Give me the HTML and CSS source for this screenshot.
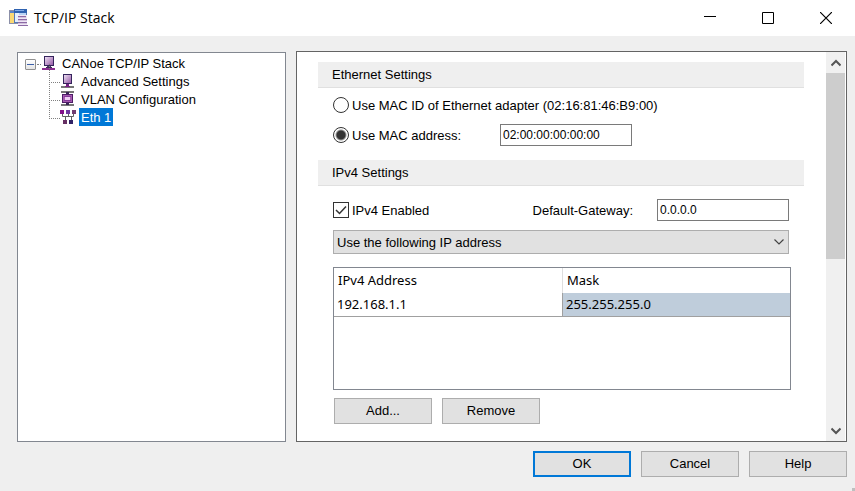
FILE: index.html
```html
<!DOCTYPE html>
<html lang="en">
<head>
<meta charset="utf-8">
<title>TCP/IP Stack</title>
<link rel="stylesheet" href="styles.css">
</head>
<body>
<header class="titlebar">
  <svg class="app-icon" width="20" height="18" viewBox="0 0 20 18" aria-hidden="true">
    <rect x="0.5" y="1.5" width="10" height="13" fill="#fbd873" stroke="#8b8fa8"/>
    <rect x="1" y="2" width="5" height="2" fill="#5b83c6"/>
    <rect x="5.5" y="0.5" width="12" height="13" fill="#b9d3f5" stroke="#5579b5"/>
    <rect x="5" y="0" width="13" height="4" fill="#2f62b0"/>
    <rect x="6" y="1" width="9" height="1" fill="#82aae6"/>
    <rect x="6" y="4" width="4" height="9" fill="#e5effc"/>
    <rect x="9" y="6" width="9" height="11" fill="#efe6f5"/>
    <path d="M9 7.5h8M9 10.5h9M9 13.5h9M9 16.5h10" stroke="#8c6aa5"/>
    <path d="M9 8.5h8M9 11.5h9M9 14.5h9" stroke="#d3c3de"/>
  </svg>
  <h1 class="title">TCP/IP Stack</h1>
  <div class="window-controls">
    <button class="window-button" type="button" aria-label="Minimize"><svg width="12" height="12" viewBox="0 0 12 12"><path d="M0 4.5h12" stroke="#000"/></svg></button>
    <button class="window-button" type="button" aria-label="Maximize"><svg width="12" height="12" viewBox="0 0 12 12"><path d="M.5.5h11v11H.5z" fill="none" stroke="#000"/></svg></button>
    <button class="window-button" type="button" aria-label="Close"><svg width="12" height="12" viewBox="0 0 12 12"><path d="M0 0l12 12M12 0L0 12" stroke="#000" stroke-width="1.2"/></svg></button>
  </div>
</header>

<main class="workspace">
  <nav class="tree" aria-label="Configuration">
    <div class="tree-row tree-root">
      <button class="expander" type="button" aria-label="Collapse"></button>
      <span class="root-link"></span>
      <svg class="tree-icon" width="16" height="16" viewBox="0 0 16 16" aria-hidden="true">
        <defs><linearGradient id="screen" x1="0" y1="0" x2="1" y2="1"><stop offset="0" stop-color="#f0e6f5"/><stop offset="1" stop-color="#9354a4"/></linearGradient></defs>
        <rect x="3.5" y="1.5" width="9" height="9" fill="url(#screen)" stroke="#35245c"/>
        <rect x="6" y="11" width="4" height="2" fill="#4a3168"/>
        <path d="M1 14h13" stroke="#8b2f91" stroke-width="2"/><path d="M5 12.5h6" stroke="#3b2d55"/>
      </svg>
      <a class="tree-label" href="#stack">CANoe TCP/IP Stack</a>
    </div>
    <ul class="tree-children">
      <li class="tree-row">
        <svg class="tree-icon" width="16" height="16" viewBox="0 0 16 16" aria-hidden="true">
          <rect x="3.5" y="1.5" width="8" height="9" fill="url(#screen)" stroke="#35245c"/>
          <rect x="6" y="11" width="3" height="2" fill="#722080"/>
          <path d="M1 14h13" stroke="#777" stroke-width="2"/><path d="M5 13.5h5" stroke="#7c2086"/>
        </svg>
        <a class="tree-label" href="#advanced">Advanced Settings</a>
      </li>
      <li class="tree-row">
        <svg class="tree-icon" width="16" height="16" viewBox="0 0 16 16" aria-hidden="true">
          <path d="M1 1h13M1 14h13" stroke="#777" stroke-width="2"/>
          <path d="M6 2.5h3M6 12.5h3" stroke="#382452" stroke-width="3"/>
          <rect x="2.5" y="3.5" width="10" height="8" fill="#a45aae" stroke="#4d1c66"/>
          <path d="M4 5.5h7M4 9.5h7" stroke="#84389a"/>
          <rect x="5" y="6" width="5" height="3" fill="#efcdf3"/>
        </svg>
        <a class="tree-label" href="#vlan">VLAN Configuration</a>
      </li>
      <li class="tree-row">
        <svg class="tree-icon" width="16" height="16" viewBox="0 0 16 16" aria-hidden="true">
          <path d="M2.5 4v3.500h11V4M8.500 4v3.500M5.500 7v4M11.500 7v4" fill="none" stroke="#606060"/>
          <path d="M0 1h4v4H0z" fill="#84118a"/><path d="M6 1h4v4H6z" fill="#6d369f"/><path d="M12 1h4v4h-4z" fill="#713d70"/>
          <path d="M3 11h4v4H3z" fill="#663063"/><path d="M9 11h4v4H9z" fill="#302266"/>
        </svg>
        <a class="tree-label selected" href="#eth1" aria-current="true">Eth 1</a>
      </li>
    </ul>
  </nav>

  <div class="panel">
    <form class="settings" id="settings">
      <h2 class="section-title">Ethernet Settings</h2>
      <div class="section ethernet">
        <div class="field-row"><input class="radio" type="radio" name="mac" id="mac-adapter"><label for="mac-adapter">Use MAC ID of Ethernet adapter (02:16:81:46:B9:00)</label></div>
        <div class="field-row"><input class="radio" type="radio" name="mac" id="mac-custom" checked><label class="mac-label" for="mac-custom">Use MAC address:</label><input class="textbox" type="text" aria-label="MAC address" value="02:00:00:00:00:00"></div>
      </div>
      <h2 class="section-title">IPv4 Settings</h2>
      <div class="section ipv4">
        <div class="field-row enable-row">
          <span class="check"><input class="checkbox" type="checkbox" id="ipv4-enabled" checked><svg class="tick" width="16" height="16" viewBox="0 0 16 16" aria-hidden="true"><path d="M3 8l3.500 3.500L13 4.500" fill="none" stroke="#333" stroke-width="1.500"/></svg></span>
          <label for="ipv4-enabled">IPv4 Enabled</label>
          <label class="gateway-label" for="gateway">Default-Gateway:</label>
          <input class="textbox" type="text" id="gateway" value="0.0.0.0">
        </div>
        <div class="select-wrap">
          <select class="select" aria-label="Address mode"><option>Use the following IP address</option></select>
          <svg class="select-arrow" width="10" height="6" viewBox="0 0 10 6" aria-hidden="true"><path d="M.5.5L5 5 9.500.5" fill="none" stroke="#444" stroke-width="1.200"/></svg>
        </div>
        <div class="grid-box">
          <table class="address-table">
            <thead><tr><th scope="col">IPv4 Address</th><th scope="col">Mask</th></tr></thead>
            <tbody><tr><td>192.168.1.1</td><td class="active-cell">255.255.255.0</td></tr></tbody>
          </table>
        </div>
        <div class="button-row">
          <button class="button" type="button">Add...</button>
          <button class="button" type="button">Remove</button>
        </div>
      </div>
    </form>
    <div class="scrollbar" role="scrollbar" aria-controls="settings" aria-valuenow="0">
      <button class="scroll-button" type="button" aria-label="Scroll up"><svg width="10" height="8" viewBox="0 0 10 8"><path d="M.5 6.500L5 2l4.500 4.500" fill="none" stroke="#555" stroke-width="2"/></svg></button>
      <div class="scroll-track"><div class="scroll-thumb"></div></div>
      <button class="scroll-button" type="button" aria-label="Scroll down"><svg width="10" height="8" viewBox="0 0 10 8"><path d="M.5 1.500L5 6l4.500-4.500" fill="none" stroke="#555" stroke-width="2"/></svg></button>
    </div>
  </div>
</main>

<footer class="dialog-actions">
  <button class="button default" type="submit" form="settings">OK</button>
  <button class="button" type="button">Cancel</button>
  <button class="button" type="button">Help</button>
</footer>
<span class="size-grip"></span>
</body>
</html>
```
FILE: styles.css
```css
* {
  box-sizing: border-box;
}

body {
  margin: 0;
  min-height: 100vh;
  display: flex;
  flex-direction: column;
  background: #efefef;
  color: #000;
  font: 13px/18px "Liberation Sans", Arial, sans-serif;
}

button,
input,
select {
  font: inherit;
  color: inherit;
  margin: 0;
}

svg {
  display: block;
  flex: none;
}

/* Title bar */
.titlebar {
  display: flex;
  align-items: center;
  height: 36px;
  padding-left: 9px;
  background: #fff;
}

.title {
  margin: 0 auto 0 5px;
  font: 14px/20px "Open Sans", "Noto Sans", sans-serif;
}

.window-controls {
  display: flex;
}

.window-button {
  display: grid;
  place-items: center;
  width: 58px;
  height: 34px;
  padding: 0;
  border: 0;
  background: none;
}

/* Main area */
.workspace {
  flex: 1;
  display: grid;
  grid-template-columns: 269px 1fr;
  gap: 10px;
  padding: 15px 8px 0 17px;
}

.tree {
  margin-top: 1px;
  padding: 1px 7px;
  border: 1px solid #828790;
  background: #fff;
}

.tree-row {
  display: flex;
  align-items: center;
  height: 18px;
}

.expander {
  position: relative;
  width: 11px;
  height: 11px;
  margin-top: 2px;
  padding: 0;
  border: 1px solid #919191;
  border-radius: 1px;
  background: linear-gradient(#fff, #e4e4e4);
}

.expander::before {
  content: "";
  position: absolute;
  inset: 4px 1px auto;
  border-top: 1px solid #3c5fa8;
}

.root-link {
  width: 4px;
  margin: 2px 0 0 1px;
  border-top: 1px dotted #808080;
}

.tree-label {
  margin-left: 3px;
  padding: 1px 2px 0;
  line-height: 17px;
  color: inherit;
  text-decoration: none;
}

.selected {
  background: #0078d7;
  color: #fff;
}

.tree-children {
  margin: 0;
  padding: 0 0 0 35px;
  list-style: none;
}

.tree-children .tree-row {
  position: relative;
}

.tree-children .tree-row::before {
  content: "";
  position: absolute;
  left: -11px;
  top: -8px;
  width: 10px;
  height: 18px;
  border: 1px dotted #808080;
  border-width: 0 0 1px 1px;
}

/* Settings panel */
.panel {
  display: flex;
  padding-right: 1px;
  border: 1px solid #646464;
  background: #fff;
}

.settings {
  flex: 1;
  padding: 10px 22px 16px 21px;
}

.section-title {
  height: 26px;
  margin: 0;
  padding-left: 14px;
  border-bottom: 1px solid #e0e0e0;
  background: #efefef;
  font: inherit;
  line-height: 25px;
}

.section {
  padding: 0 15px;
}

.ethernet {
  padding-top: 2px;
  padding-bottom: 10px;
}

.field-row {
  display: flex;
  align-items: center;
  height: 30px;
  gap: 3px;
}

.field-row label {
  padding-top: 1px;
}

.radio {
  appearance: none;
  flex: none;
  width: 16px;
  height: 16px;
  border: 1px solid #333;
  border-radius: 50%;
  background: #fff;
}

.radio:checked {
  background: radial-gradient(circle, #333 4px, #fff 6px);
}

.mac-label {
  width: 145px;
}

.textbox {
  width: 132px;
  height: 22px;
  padding: 0 2px;
  border: 1px solid #7a7a7a;
  border-radius: 0;
  background: #fff;
  font-size: 12px;
}

.ipv4 {
  padding-top: 9px;
}

.enable-row {
  margin-bottom: 5px;
}

.check {
  position: relative;
}

.checkbox {
  appearance: none;
  display: block;
  width: 16px;
  height: 16px;
  border: 1px solid #333;
  background: #fff;
}

.tick {
  position: absolute;
  inset: 0;
  pointer-events: none;
}

.gateway-label {
  margin-left: auto;
  padding-right: 21px;
}

.select-wrap {
  position: relative;
}

.select {
  appearance: none;
  display: block;
  width: 100%;
  height: 24px;
  padding: 1px 3px 0;
  border: 1px solid #adadad;
  border-radius: 0;
  background: #e1e1e1;
}

.select-arrow {
  position: absolute;
  right: 5px;
  top: 9px;
  pointer-events: none;
}

.grid-box {
  min-height: 123px;
  margin: 13px -2px 8px 0;
  border: 1px solid #828790;
}

.address-table {
  width: 100%;
  table-layout: fixed;
  border-collapse: separate;
  border-spacing: 0;
  font: 13px/18px "Noto Sans", "Open Sans", sans-serif;
}

.address-table th,
.address-table td {
  padding: 0 4px 1px;
  text-align: left;
  font-weight: 400;
}

.address-table th {
  height: 25px;
}

.address-table td {
  height: 24px;
  padding-left: 3px;
  border-bottom: 1px solid #a0a0a0;
}

.address-table th + th {
  border-left: 1px solid #dedede;
}

.address-table .active-cell {
  border-left: 1px solid #a0a0a0;
  background: #bfcddb;
}

.button-row {
  display: flex;
  gap: 10px;
  padding-left: 1px;
}

.button {
  width: 98px;
  height: 26px;
  padding: 0;
  border: 1px solid #adadad;
  background: #e1e1e1;
}

.default {
  border: 2px solid #0078d7;
}

/* Scroll bar */
.scrollbar {
  display: flex;
  flex-direction: column;
  width: 19px;
  background: #f0f0f0;
}

.scroll-button {
  display: grid;
  place-items: center;
  height: 21px;
  padding: 0;
  border: 0;
  background: none;
}

.scroll-track {
  flex: 1;
}

.scroll-thumb {
  height: 53.5%;
  background: #cdcdcd;
}

/* Dialog actions */
.dialog-actions {
  display: flex;
  justify-content: flex-end;
  gap: 10px;
  padding: 9px 8px 14px;
}

.size-grip {
  position: absolute;
  right: 0;
  bottom: 0;
  width: 3px;
  height: 3px;
  background: #bfbfbf;
}
```
